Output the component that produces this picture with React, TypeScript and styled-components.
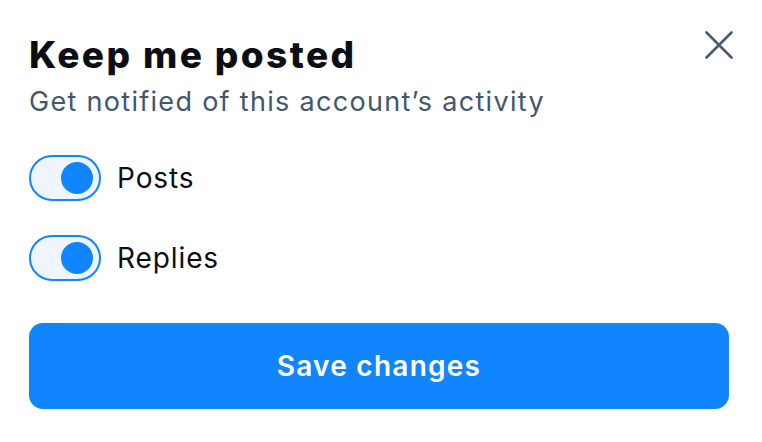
import React, { useState } from "react";
import styled, { createGlobalStyle } from "styled-components";

const GlobalStyle = createGlobalStyle`
  html, body { margin: 0; padding: 0; background: #ffffff; }
  body {
    font-family: Inter, "Noto Sans", sans-serif;
    -webkit-font-smoothing: antialiased;
  }
`;

const Dialog = styled.div`
  width: 762px;
  height: 442px;
  box-sizing: border-box;
  padding: 34px 33px 0 29px;
  display: flex;
  flex-direction: column;
`;

const Header = styled.div`
  display: flex;
  justify-content: space-between;
  align-items: flex-start;
`;

const TitleBlock = styled.div`
  display: flex;
  flex-direction: column;
  gap: 10px;
`;

const Title = styled.h1`
  margin: 0;
  font-size: 37px;
  line-height: 42px;
  font-weight: 800;
  letter-spacing: 2.4px;
  color: #0b0f14;
`;

const Subtitle = styled.p`
  margin: 0;
  font-size: 27px;
  line-height: 32px;
  font-weight: 400;
  letter-spacing: 1.3px;
  color: #42576c;
`;

const CloseButton = styled.button`
  width: 40px;
  height: 40px;
  margin: -9px -10px 0 0;
  padding: 0;
  border: none;
  background: transparent;
  display: flex;
  align-items: center;
  justify-content: center;
  cursor: pointer;
  color: #4b5b6f;
`;

const Options = styled.div`
  display: flex;
  flex-direction: column;
  gap: 34px;
  margin-top: 37px;
`;

const Row = styled.label`
  display: flex;
  align-items: center;
  gap: 16px;
  cursor: pointer;
`;

const Track = styled.span<{ $on: boolean }>`
  box-sizing: border-box;
  width: 72px;
  height: 46px;
  border-radius: 23px;
  border: 2px solid #1185fe;
  background: #eef5ff;
  display: flex;
  align-items: center;
  justify-content: ${(p) => (p.$on ? "flex-end" : "flex-start")};
  padding: 0 6px;
`;

const Knob = styled.span<{ $on: boolean }>`
  width: 32px;
  height: 32px;
  border-radius: 50%;
  background: ${(p) => (p.$on ? "#1185fe" : "#b8c3cf")};
`;

const Label = styled.span`
  font-size: 28px;
  line-height: 34px;
  letter-spacing: 0.9px;
  color: #0b0f14;
`;

const SaveButton = styled.button`
  margin-top: 42px;
  width: 100%;
  height: 86px;
  border: none;
  border-radius: 14px;
  background: #1185fe;
  color: #ffffff;
  font-family: inherit;
  font-size: 28px;
  font-weight: 600;
  letter-spacing: 1.25px;
  cursor: pointer;
`;

function Toggle({ on }: { on: boolean }) {
  return (
    <Track $on={on}>
      <Knob $on={on} />
    </Track>
  );
}

export default function App() {
  const [posts, setPosts] = useState(true);
  const [replies, setReplies] = useState(true);
  return (
    <>
      <GlobalStyle />
      <Dialog>
        <Header>
          <TitleBlock>
            <Title>Keep me posted</Title>
            <Subtitle>Get notified of this account’s activity</Subtitle>
          </TitleBlock>
          <CloseButton aria-label="Close">
            <svg width="28" height="28" viewBox="0 0 28 28" fill="none">
              <path d="M1.5 1.5 L26.5 26.5 M26.5 1.5 L1.5 26.5" stroke="currentColor" strokeWidth="2.6" strokeLinecap="round" />
            </svg>
          </CloseButton>
        </Header>
        <Options>
          <Row onClick={() => setPosts(!posts)}>
            <Toggle on={posts} />
            <Label>Posts</Label>
          </Row>
          <Row onClick={() => setReplies(!replies)}>
            <Toggle on={replies} />
            <Label>Replies</Label>
          </Row>
        </Options>
        <SaveButton>Save changes</SaveButton>
      </Dialog>
    </>
  );
}
